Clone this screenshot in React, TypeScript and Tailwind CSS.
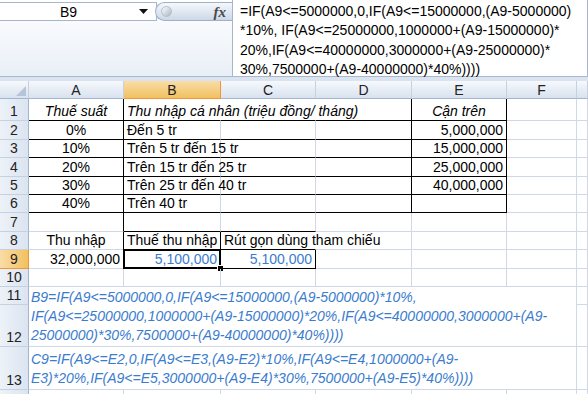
import type { ReactNode } from 'react';
import clsx from 'clsx';

type Edge = 'g' | 'k' | 'n';

const rightEdge: Record<Edge, string> = {
  g: 'border-r-[#d0d7e5]',
  k: 'border-r-black',
  n: 'border-r-transparent',
};
const bottomEdge: Record<Edge, string> = {
  g: 'border-b-[#d0d7e5]',
  k: 'border-b-black',
  n: 'border-b-transparent',
};

type CellProps = {
  children?: ReactNode;
  r?: Edge;
  b?: Edge;
  align?: 'left' | 'center' | 'right';
  className?: string;
};

function Cell({ children, r = 'g', b = 'g', align = 'left', className }: CellProps) {
  return (
    <div
      className={clsx(
        'relative flex items-end whitespace-nowrap border-r border-b px-[3px] pb-[1px] leading-[16px]',
        rightEdge[r],
        bottomEdge[b],
        align === 'center' && 'justify-center',
        align === 'right' && 'justify-end',
        className,
      )}
    >
      {children}
    </div>
  );
}

function RowHead({ n, active }: { n?: number; active?: boolean }) {
  return (
    <div
      className={clsx(
        'flex items-end justify-center border-r border-b pb-[1px] leading-[16px] text-[#222]',
        active
          ? 'border-[#f29536] bg-gradient-to-r from-[#f9dca6] to-[#f1c15f]'
          : 'border-r-[#9eb6ce] border-b-[#c5d1df] bg-gradient-to-r from-[#edf2f8] to-[#dbe4f0]',
      )}
    >
      {n}
    </div>
  );
}

function ColHead({ label, active }: { label: string; active?: boolean }) {
  return (
    <div
      className={clsx(
        'flex items-center justify-center border-r border-b leading-[16px] text-[#222]',
        active
          ? 'border-r-[#f29536] border-b-[#f29536] bg-gradient-to-b from-[#f9dca6] to-[#f1c15f]'
          : 'border-r-[#c5d1df] border-b-[#9eb6ce] bg-gradient-to-b from-[#f6f8fc] to-[#d9e2ef]',
      )}
    >
      {label}
    </div>
  );
}

const formula = [
  '=IF(A9<=5000000,0,IF(A9<=15000000,(A9-5000000)',
  '*10%, IF(A9<=25000000,1000000+(A9-15000000)*',
  '20%,IF(A9<=40000000,3000000+(A9-25000000)*',
  '30%,7500000+(A9-40000000)*40%))))',
];

const bands = [
  { rate: '0%', label: 'Đến 5 tr', cap: '5,000,000' },
  { rate: '10%', label: 'Trên 5 tr đến 15 tr', cap: '15,000,000' },
  { rate: '20%', label: 'Trên 15 tr đến 25 tr', cap: '25,000,000' },
  { rate: '30%', label: 'Trên 25 tr đến 40 tr', cap: '40,000,000' },
  { rate: '40%', label: 'Trên 40 tr', cap: '' },
];

const noteB9 = [
  'B9=IF(A9<=5000000,0,IF(A9<=15000000,(A9-5000000)*10%,',
  'IF(A9<=25000000,1000000+(A9-15000000)*20%,IF(A9<=40000000,3000000+(A9-',
  '25000000)*30%,7500000+(A9-40000000)*40%))))',
];

const noteC9 = [
  'C9=IF(A9<=E2,0,IF(A9<=E3,(A9-E2)*10%,IF(A9<=E4,1000000+(A9-',
  'E3)*20%,IF(A9<=E5,3000000+(A9-E4)*30%,7500000+(A9-E5)*40%))))',
];

function Note({ lines, className }: { lines: string[]; className?: string }) {
  return (
    <div
      className={clsx(
        'col-span-6 flex flex-col justify-end border-r border-b border-[#d0d7e5] pb-[1px] pl-[2px] italic leading-[19px] text-[#3a7ccd]',
        className,
      )}
    >
      {lines.map((l) => (
        <div key={l} className="whitespace-nowrap">
          {l}
        </div>
      ))}
    </div>
  );
}

export default function App() {
  return (
    <div className="h-[394px] w-[588px] overflow-hidden bg-white font-['Liberation_Sans',Arial,sans-serif] text-[14px] text-black">
      {/* formula bar */}
      <div className="flex h-[77px] border-b border-[#a9b8cc] bg-gradient-to-b from-white to-[#e9eff7]">
        <div className="flex h-[22px] w-[232px] items-start pt-[2px]">
          <div className="flex h-[19px] w-[157px] items-center border border-l-0 border-[#a7b6cb] bg-white">
            <span className="flex-1 pr-[2px] text-center leading-[16px]">B9</span>
            <svg width="9" height="5" className="mr-[8px]">
              <path d="M0 0h9L4.5 5z" fill="#111" />
            </svg>
          </div>
          <div className="-ml-[2px] flex h-[19px] flex-1 items-center rounded-l-full border border-r-0 border-[#9fb0c8] bg-gradient-to-b from-[#f5f8fc] to-[#cdd8e7]">
            <span className="ml-[5px] h-[11px] w-[11px] rounded-full border border-[#b4bfcc] bg-gradient-to-br from-white to-[#aab5c3]" />
            <span className="ml-auto mr-[6px] font-['Liberation_Serif',serif] text-[15px] font-bold italic leading-[16px] text-[#4a4a4a]">
              fx
            </span>
          </div>
        </div>
        <div className="flex-1 border-x border-[#a7b6cb] bg-white pl-[7px] pt-[2px] leading-[19.3px]">
          {formula.map((l) => (
            <div key={l} className="whitespace-nowrap">
              {l}
            </div>
          ))}
        </div>
      </div>
      <div className="h-[4px] bg-[#dae4f1]" />

      {/* sheet */}
      <div className="grid grid-cols-[29px_95px_97px_95px_96px_95px_70px_1fr] grid-rows-[18px_22px_19px_18px_19px_18px_18px_19px_18px_19px_18px_18px_42px_43px_20px]">
        <div className="relative border-r border-b border-r-[#c5d1df] border-b-[#9eb6ce] bg-gradient-to-b from-[#f6f8fc] to-[#d9e2ef]">
          <svg width="10" height="10" className="absolute right-[2px] bottom-[2px]">
            <path d="M10 0V10H0z" fill="#b5c4d6" />
          </svg>
        </div>
        <ColHead label="A" />
        <ColHead label="B" active />
        <ColHead label="C" />
        <ColHead label="D" />
        <ColHead label="E" />
        <ColHead label="F" />
        <ColHead label="" />

        {/* row 1 */}
        <RowHead n={1} />
        <Cell r="k" b="k" align="center" className="italic">
          Thuế suất
        </Cell>
        <Cell r="n" b="k" className="italic">
          Thu nhập cá nhân (triệu đồng/ tháng)
        </Cell>
        <Cell r="n" b="k" />
        <Cell r="k" b="k" />
        <Cell r="k" b="k" align="center" className="italic">
          Cận trên
        </Cell>
        <Cell />
        <Cell />

        {bands.map((band, i) => (
          <div key={band.rate} className="contents">
            <RowHead n={i + 2} />
            <Cell r="k" b="k" align="center">
              {band.rate}
            </Cell>
            <Cell b="k">{band.label}</Cell>
            <Cell b="k" />
            <Cell r="k" b="k" />
            <Cell r="k" b="k" align="right">
              {band.cap}
            </Cell>
            <Cell />
            <Cell />
          </div>
        ))}

        {/* row 7 */}
        <RowHead n={7} />
        <Cell r="k" />
        <Cell b="k" />
        <Cell b="k" />
        <Cell />
        <Cell />
        <Cell />
        <Cell />

        {/* row 8 */}
        <RowHead n={8} />
        <Cell r="k" align="center">
          Thu nhập
        </Cell>
        <Cell r="k" b="k">
          Thuế thu nhập
        </Cell>
        <Cell r="n" b="k">
          Rút gọn dùng tham chiếu
        </Cell>
        <Cell />
        <Cell />
        <Cell />
        <Cell />

        {/* row 9 */}
        <RowHead n={9} active />
        <Cell align="right">32,000,000</Cell>
        <Cell align="right" className="text-[#3a7ccd]">
          5,100,000
          <span className="absolute -top-px -left-px -right-px -bottom-px border-2 border-black" />
          <span className="absolute -right-[4px] -bottom-[4px] h-[7px] w-[7px] border border-white bg-black" />
        </Cell>
        <Cell r="k" b="k" align="right" className="text-[#3a7ccd]">
          5,100,000
        </Cell>
        <Cell />
        <Cell />
        <Cell />
        <Cell />

        {/* row 10 */}
        <RowHead n={10} />
        <Cell />
        <Cell />
        <Cell />
        <Cell />
        <Cell />
        <Cell />
        <Cell />

        {/* rows 11-13: merged note cells */}
        <RowHead n={11} />
        <Note lines={noteB9} className="row-span-2" />
        <Cell />
        <RowHead n={12} />
        <Cell />
        <RowHead n={13} />
        <Note lines={noteC9} />
        <Cell />

        {/* row 14, only its top edge shows */}
        <RowHead />
        <Cell />
        <Cell />
        <Cell />
        <Cell />
        <Cell />
        <Cell />
        <Cell />
      </div>
    </div>
  );
}
